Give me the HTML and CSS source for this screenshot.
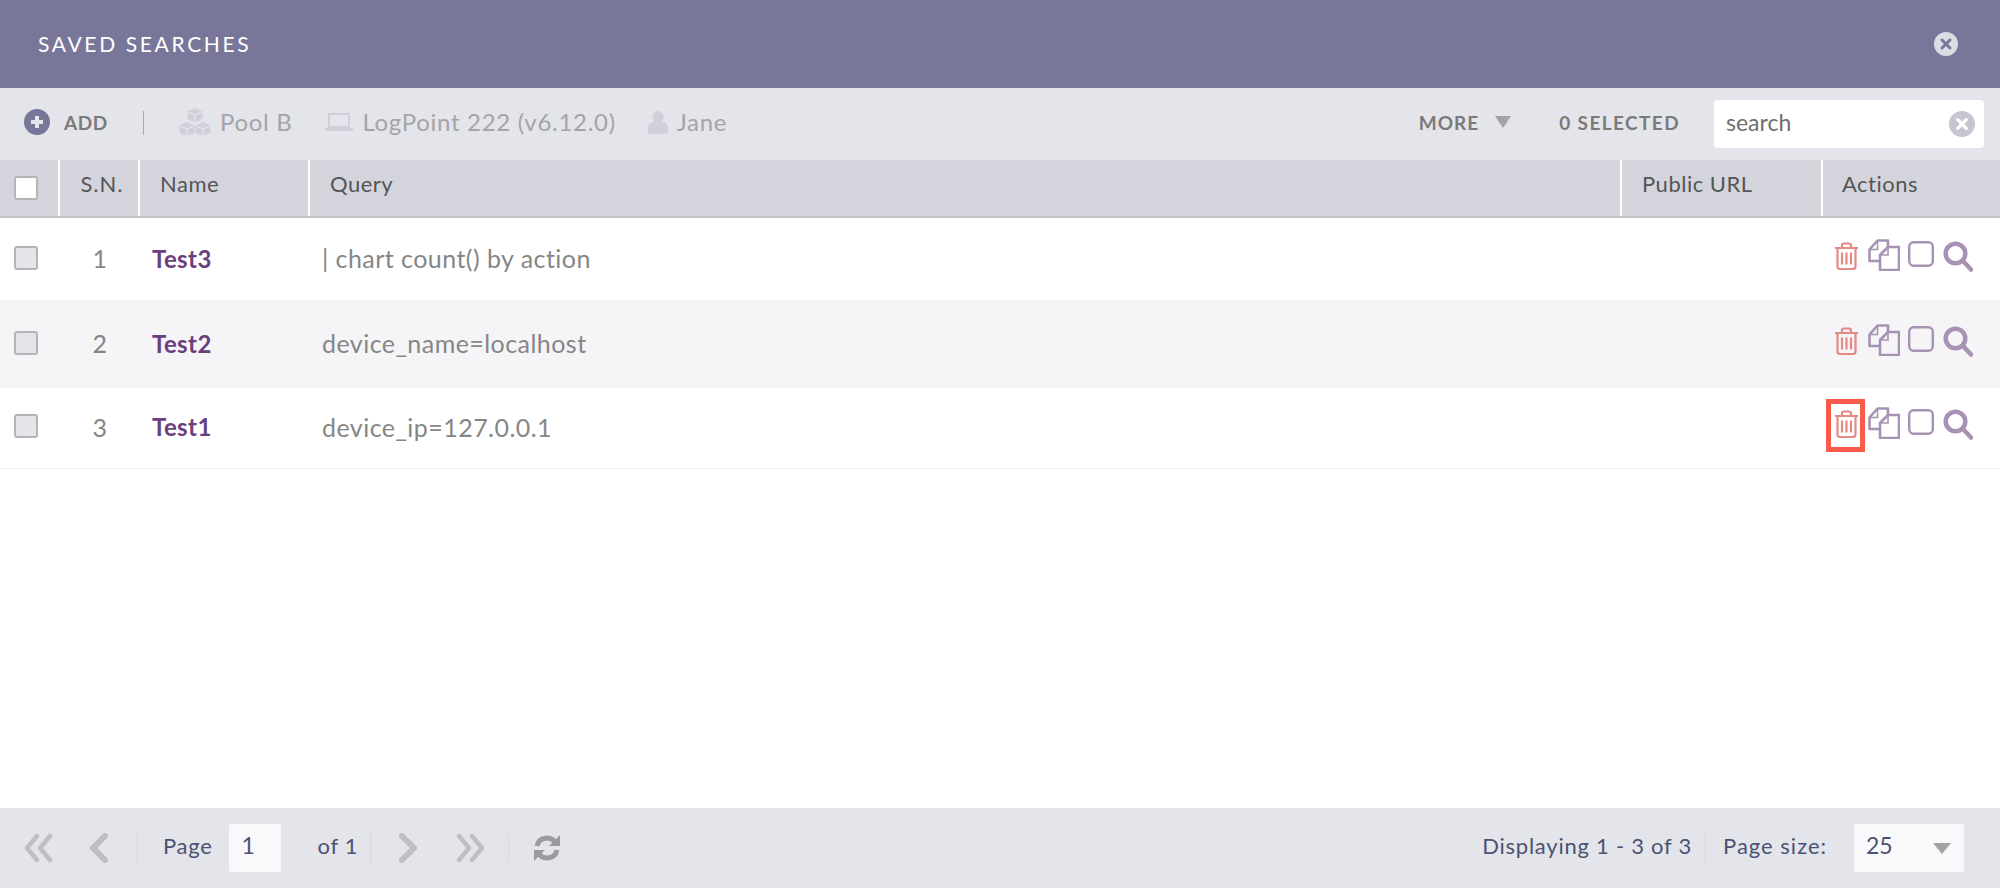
FILE: index.html
```html
<!DOCTYPE html>
<html>
  <head>
    <meta charset="UTF-8">
    <title>Saved Searches</title>
    <link rel="stylesheet" href="styles.css">
  </head>
  <body>
    <svg class="defs" width="0" height="0">
      <symbol id="i-trash" viewBox="0 0 25 28">
        <path d="M1 6h23M8 6V3.500Q8 1.500 10 1.500h5q2 0 2 2V6M3.500 6v18.500q0 2.500 2.500 2.500h13q2.500 0 2.500-2.500V6" fill="none" stroke="currentColor" stroke-width="2.200"/>
        <path d="M8 10.500v12M12.500 10.500v12M17 10.500v12" fill="none" stroke="currentColor" stroke-width="2.200"/>
      </symbol>
      <symbol id="i-copy" viewBox="0 0 32 32">
        <path d="M11 22H1.500V10.500L9.500 1.500H20V8" fill="none" stroke="currentColor" stroke-width="2.600" stroke-linejoin="round"/>
        <path d="M9.500 1.500v9h-8" fill="none" stroke="currentColor" stroke-width="1.600"/>
        <path d="M12 31V16l8-8h11v23z" fill="none" stroke="currentColor" stroke-width="2.600" stroke-linejoin="round"/>
        <path d="M20 8v8h-8" fill="none" stroke="currentColor" stroke-width="1.600"/>
      </symbol>
      <symbol id="i-square" viewBox="0 0 26 26">
        <rect x="1.200" y="1.200" width="23.600" height="23.600" rx="4.500" fill="none" stroke="currentColor" stroke-width="2.400"/>
      </symbol>
      <symbol id="i-search" viewBox="0 0 30 31">
        <circle cx="12.500" cy="12.500" r="9.800" fill="none" stroke="currentColor" stroke-width="4.500"/>
        <path d="M20 20l8 8.500" fill="none" stroke="currentColor" stroke-width="4.500" stroke-linecap="round"/>
      </symbol>
      <symbol id="i-close" viewBox="0 0 24 24">
        <circle cx="12" cy="12" r="12" fill="currentColor"/>
        <path d="M8 8l8 8M16 8l-8 8" fill="none" stroke="var(--mark)" stroke-width="3" stroke-linecap="round"/>
      </symbol>
      <symbol id="i-left" viewBox="0 0 20 30">
        <path d="M16 3L4 15l12 12" fill="none" stroke="currentColor" stroke-width="6" stroke-linecap="round" stroke-linejoin="round"/>
      </symbol>
      <symbol id="i-double" viewBox="0 0 30 30">
        <path d="M13 3L3 15l10 12M26 3L16 15l10 12" fill="none" stroke="currentColor" stroke-width="4.500" stroke-linecap="round" stroke-linejoin="round"/>
      </symbol>
    </svg>

    <div class="dialog">
      <div class="title-bar">
        <h4>SAVED SEARCHES</h4>
        <svg class="close-icon"><use href="#i-close"/></svg>
      </div>

      <div class="toolbar">
        <svg class="add-icon" viewBox="0 0 26 26">
          <circle cx="13" cy="13" r="13" fill="#78779a"/>
          <path d="M13 7v12M7 13h12" stroke="#e4e5ea" stroke-width="4"/>
        </svg>
        <span class="add-label">ADD</span>
        <span class="tool-sep"></span>
        <svg class="pool-icon" viewBox="0 0 32 28" fill="#cfd0da">
          <path d="M16 0l7.500 3.500v7.500L16 14.500 8.500 11V3.500z"/>
          <path d="M8 14l7.500 3.500V25L8 28 .5 25v-7.500z"/>
          <path d="M24 14l7.500 3.500V25L24 28l-7.500-3v-7.500z"/>
          <path d="M9.500 4L16 7l6.500-3M16 7v7M1.500 18L8 21l6.500-3M8 21v7M17.500 18l6.500 3 6.500-3M24 21v7" fill="none" stroke="#e4e5ea" stroke-width="1.200"/>
        </svg>
        <span class="crumb">Pool B</span>
        <svg class="laptop-icon" viewBox="0 0 28 18">
          <rect x="4" y="1" width="20" height="13" fill="none" stroke="#cfd0da" stroke-width="2"/>
          <rect x="0" y="15" width="28" height="3" fill="#cfd0da"/>
        </svg>
        <span class="crumb">LogPoint 222 (v6.12.0)</span>
        <svg class="person-icon" viewBox="0 0 20 23" fill="#cfd0da">
          <ellipse cx="10" cy="6" rx="5.500" ry="6"/>
          <path d="M0 21v-5q0-4 6-5h8q6 1 6 5v5q0 2-2 2H2q-2 0-2-2z"/>
        </svg>
        <span class="crumb">Jane</span>

        <span class="more">MORE</span>
        <span class="caret more-caret"></span>
        <span class="selected">0 SELECTED</span>
        <div class="search-box">
          <input type="text" value="search">
          <svg class="clear-icon"><use href="#i-close"/></svg>
        </div>
      </div>

      <div class="table-wrap">
        <table>
          <colgroup>
            <col class="col-check">
            <col class="col-sn">
            <col class="col-name">
            <col>
            <col class="col-url">
            <col class="col-actions">
          </colgroup>
          <thead>
            <tr>
              <th><input type="checkbox" class="check check-head"></th>
              <th class="center">S.N.</th>
              <th>Name</th>
              <th>Query</th>
              <th>Public URL</th>
              <th>Actions</th>
            </tr>
          </thead>
          <tbody>
            <tr class="row-1">
              <td><input type="checkbox" class="check"></td>
              <td class="center">1</td>
              <td class="name">Test3</td>
              <td class="query">| chart count() by action</td>
              <td></td>
              <td>
                <div class="actions">
                  <span class="act-trash"><svg><use href="#i-trash"/></svg></span>
                  <svg class="act-copy"><use href="#i-copy"/></svg>
                  <svg class="act-square"><use href="#i-square"/></svg>
                  <svg class="act-search"><use href="#i-search"/></svg>
                </div>
              </td>
            </tr>
            <tr class="row-2">
              <td><input type="checkbox" class="check"></td>
              <td class="center">2</td>
              <td class="name">Test2</td>
              <td class="query">device_name=localhost</td>
              <td></td>
              <td>
                <div class="actions">
                  <span class="act-trash"><svg><use href="#i-trash"/></svg></span>
                  <svg class="act-copy"><use href="#i-copy"/></svg>
                  <svg class="act-square"><use href="#i-square"/></svg>
                  <svg class="act-search"><use href="#i-search"/></svg>
                </div>
              </td>
            </tr>
            <tr class="row-3">
              <td><input type="checkbox" class="check"></td>
              <td class="center">3</td>
              <td class="name">Test1</td>
              <td class="query">device_ip=127.0.0.1</td>
              <td></td>
              <td>
                <div class="actions">
                  <span class="act-trash flagged"><svg><use href="#i-trash"/></svg></span>
                  <svg class="act-copy"><use href="#i-copy"/></svg>
                  <svg class="act-square"><use href="#i-square"/></svg>
                  <svg class="act-search"><use href="#i-search"/></svg>
                </div>
              </td>
            </tr>
          </tbody>
        </table>
      </div>

      <div class="pager">
        <svg class="pg-double"><use href="#i-double"/></svg>
        <svg class="pg-single pg-prev"><use href="#i-left"/></svg>
        <span class="pg-sep sep-a"></span>
        <span class="pg-label">Page</span>
        <input class="pg-input" type="text" value="1">
        <span class="pg-label pg-of">of 1</span>
        <span class="pg-sep sep-b"></span>
        <svg class="pg-single pg-next flip"><use href="#i-left"/></svg>
        <svg class="pg-double pg-last flip"><use href="#i-double"/></svg>
        <span class="pg-sep sep-c"></span>
        <svg class="refresh" viewBox="0 0 28 28">
          <path d="M4 12Q5.500 4.500 14 4q5 0 8 4" fill="none" stroke="#9b9b9b" stroke-width="5"/>
          <path d="M27 1v11H16z" fill="#9b9b9b"/>
          <path d="M24 16q-1.500 7.500-10 8-5 0-8-4" fill="none" stroke="#9b9b9b" stroke-width="5"/>
          <path d="M1 27V16h11z" fill="#9b9b9b"/>
        </svg>

        <span class="pg-label pg-display">Displaying 1 - 3 of 3</span>
        <span class="pg-sep sep-d"></span>
        <span class="pg-label pg-size">Page size:</span>
        <div class="size-select">
          <span class="size-value">25</span>
          <span class="caret size-caret"></span>
        </div>
      </div>
    </div>
  </body>
</html>
```

FILE: styles.css
```css
* {
    box-sizing: border-box;
}

body {
    margin: 0;
    background-color: #fff;
    font-family: Lato, "Open Sans", sans-serif;
    overflow: hidden;
}

.defs {
    display: block;
    height: 0;
}

.dialog {
    height: 888px;
    display: flex;
    flex-direction: column;
}

svg {
    display: block;
    flex: none;
}

/* title */
.title-bar {
    height: 88px;
    flex: none;
    display: flex;
    align-items: center;
    justify-content: space-between;
    padding: 0 42px 0 38px;
    background-color: #78779a;
}

h4 {
    margin: 0 0 2px;
    color: #fff;
    font-size: 21px;
    font-weight: 400;
    letter-spacing: 2.65px;
}

.close-icon {
    width: 24px;
    height: 24px;
    color: #dcdce5;
    --mark: #78779a;
}

/* toolbar */
.toolbar {
    height: 72px;
    flex: none;
    display: flex;
    align-items: center;
    padding: 0 16px 4px 24px;
    background-color: #e4e5ea;
}

.add-icon {
    width: 26px;
    height: 26px;
}

.add-label {
    margin-left: 14px;
    color: #7a7a7a;
    font-size: 19px;
    font-weight: 700;
    letter-spacing: .6px;
}

.tool-sep {
    width: 1px;
    height: 24px;
    margin: 2px 35px 0 35px;
    background-color: #a9a9ad;
}

.pool-icon {
    width: 32px;
    height: 28px;
}

.crumb {
    margin: 0 0 2px 9px;
    color: #a4a4a8;
    font-size: 24px;
    letter-spacing: .7px;
}

.laptop-icon {
    width: 28px;
    height: 18px;
    margin-left: 33px;
}

.person-icon {
    width: 20px;
    height: 23px;
    margin-left: 32px;
}

.more {
    margin-left: auto;
    color: #7a7a7a;
    font-size: 19px;
    font-weight: 700;
    letter-spacing: 1px;
}

.caret {
    width: 0;
    height: 0;
    border-style: solid;
    border-color: #a3a3a3 transparent transparent;
}

.more-caret {
    border-width: 12px 8px 0;
    margin-left: 16px;
}

.selected {
    margin-left: 48px;
    color: #7a7a7a;
    font-size: 19px;
    font-weight: 700;
    letter-spacing: 1.4px;
}

.search-box {
    width: 270px;
    height: 48px;
    margin-top: 4px;
    margin-left: 34px;
    display: flex;
    align-items: center;
    padding: 0 9px 0 12px;
    border-radius: 4px;
    background-color: #fff;
}

.search-box input {
    flex: 1;
    min-width: 0;
    border: 0;
    padding: 0 0 4px;
    outline: none;
    color: #6e6e6e;
    font: 23px Lato, sans-serif;
}

.clear-icon {
    width: 26px;
    height: 26px;
    color: #c6c6d3;
    --mark: #fff;
}

/* table */
.table-wrap {
    flex: 1;
}

table {
    width: 100%;
    table-layout: fixed;
    border-collapse: collapse;
}

.col-check {
    width: 59px;
}

.col-sn {
    width: 80px;
}

.col-name {
    width: 170px;
}

.col-url {
    width: 201px;
}

.col-actions {
    width: 178px;
}

th {
    height: 57px;
    padding: 0 0 9px 20px;
    border-right: 2px solid #fff;
    border-bottom: 2px solid #c2c2c6;
    background-color: #d4d4dd;
    color: #555;
    font-size: 22px;
    font-weight: 400;
    text-align: left;
    letter-spacing: .5px;
}

th:first-child {
    padding: 0 0 0 14px;
}

th:last-child {
    padding-left: 19px;
    border-right: 0;
}

th.center {
    padding: 0 0 9px 6px;
    text-align: center;
    letter-spacing: 1px;
}

td {
    padding: 0 0 2px 13px;
    color: #868686;
    font-size: 25px;
    letter-spacing: .45px;
}

td.center {
    padding-left: 2px;
    text-align: center;
}

td:first-child {
    padding-left: 14px;
}

td:last-child {
    padding-left: 12px;
}

.row-1 td {
    height: 83px;
}

.row-2 td {
    height: 88px;
    background-color: #f5f5f8;
}

.row-3 td {
    height: 80px;
    border-bottom: 1px solid #f0f0f3;
}

td.name {
    color: #6b3f7c;
    font-size: 24px;
    font-weight: 700;
    letter-spacing: .4px;
}

.check {
    appearance: none;
    display: block;
    width: 24px;
    height: 24px;
    margin: -1px 0 0;
    border: 2px solid #b5b5b8;
    border-radius: 3px;
    background-color: #e4e5ea;
}

.check-head {
    margin-top: 0;
    background-color: #fff;
}

.actions {
    display: flex;
    align-items: flex-start;
    margin-top: -4px;
    color: #a892b4;
}

.act-trash {
    position: relative;
    width: 25px;
    height: 28px;
    margin-top: 1px;
    color: #e38a85;
}

.act-trash svg {
    width: 25px;
    height: 28px;
}

.flagged::after {
    content: "";
    position: absolute;
    top: -11px;
    right: -6px;
    bottom: -14px;
    left: -8px;
    border: 5px solid #f95a4a;
}

.act-copy {
    width: 32px;
    height: 32px;
    margin-left: 9px;
    margin-top: -2px;
}

.act-square {
    width: 26px;
    height: 26px;
    margin-left: 8px;
}

.act-search {
    width: 30px;
    height: 31px;
    margin-left: 9px;
}

/* pager */
.pager {
    height: 80px;
    flex: none;
    display: flex;
    align-items: center;
    padding: 0 36px 0 24px;
    background-color: #e4e5ea;
    color: #4b5272;
}

.flip {
    transform: scaleX(-1);
}

.pg-double {
    width: 30px;
    height: 30px;
    color: #bfbfc2;
}

.pg-single {
    width: 20px;
    height: 30px;
    color: #bfbfc2;
}

.pg-prev {
    margin-left: 35px;
}

.pg-sep {
    width: 1px;
    height: 30px;
    background-color: #d8d8dd;
}

.sep-a {
    margin: 0 25px 0 28px;
}

.pg-label {
    margin-bottom: 6px;
    font-size: 22px;
    letter-spacing: .7px;
}

.pg-input {
    width: 52px;
    height: 48px;
    margin-left: 17px;
    padding: 0 0 6px 12px;
    border: 0;
    border-radius: 3px;
    outline: none;
    background-color: #f9f9fb;
    color: #4b5272;
    font: 23px Lato, sans-serif;
}

.pg-of {
    margin-left: 36px;
}

.sep-b {
    margin: 0 27px 0 12px;
}

.pg-last {
    margin-left: 37px;
}

.sep-c {
    margin: 0 24px 0 23px;
}

.refresh {
    width: 28px;
    height: 28px;
}

.pg-display {
    margin-left: auto;
    letter-spacing: .75px;
}

.sep-d {
    margin: 0 17px 0 13px;
}

.pg-size {
    letter-spacing: 1px;
}

.size-select {
    width: 110px;
    height: 48px;
    margin-left: 27px;
    display: flex;
    align-items: center;
    justify-content: space-between;
    padding: 0 13px 0 12px;
    border-radius: 3px;
    background-color: #f9f9fb;
    font-size: 23px;
}

.size-value {
    margin-bottom: 6px;
}

.size-caret {
    border-width: 11px 9px 0;
}
```
